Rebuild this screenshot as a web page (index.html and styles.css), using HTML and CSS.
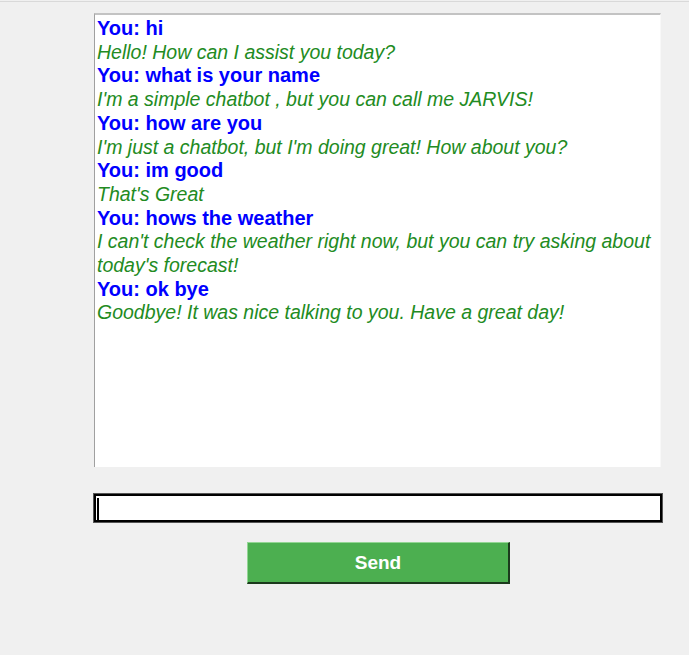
FILE: index.html
```html
<!DOCTYPE html>
<html>
<head>
<meta charset="utf-8">
<link rel="stylesheet" href="styles.css">
</head>
<body>
<div class="window">
  <div class="chat">
    <div class="you">You: hi</div>
    <div class="bot">Hello! How can I assist you today?</div>
    <div class="you">You: what is your name</div>
    <div class="bot">I'm a simple chatbot , but you can call me JARVIS!</div>
    <div class="you">You: how are you</div>
    <div class="bot">I'm just a chatbot, but I'm doing great! How about you?</div>
    <div class="you">You: im good</div>
    <div class="bot">That's Great</div>
    <div class="you">You: hows the weather</div>
    <div class="bot">I can't check the weather right now, but you can try asking about today's forecast!</div>
    <div class="you">You: ok bye</div>
    <div class="bot">Goodbye! It was nice talking to you. Have a great day!</div>
  </div>
  <div class="entry"><span class="caret"></span></div>
  <div class="btnrow"><button class="send">Send</button></div>
</div>
</body>
</html>
```
FILE: styles.css
```css
html, body {
  margin: 0;
  padding: 0;
  background: #f0f0f0;
}
body {
  width: 689px;
  height: 655px;
  overflow: hidden;
  font-family: "Liberation Sans", Arial, sans-serif;
}
.window {
  border-top: 1px solid #d9d9d9;
  margin-top: 1px;
  padding-top: 11px;
  display: flex;
  flex-direction: column;
}
.chat {
  margin-left: 94px;
  width: 567px;
  height: 454px;
  background: #fff;
  border-top: 2px solid #c3c3c3;
  border-left: 1px solid #a0a0a0;
  border-right: 1px solid #f8f8f8;
  padding: 2px 1px 0 2px;
  box-sizing: border-box;
  font-size: 20px;
  line-height: 23.7px;
}
.you {
  color: #0000ff;
  font-weight: bold;
}
.bot {
  color: #228b22;
  font-style: italic;
  font-size: 19.5px;
}
.entry {
  margin-top: 26px;
  margin-left: 93px;
  width: 570px;
  height: 30px;
  box-sizing: border-box;
  background: #fff;
  border: 1px solid #555;
  box-shadow: inset 0 0 0 2px #000;
  position: relative;
}
.caret {
  position: absolute;
  left: 3px;
  top: 4px;
  width: 2px;
  height: 22px;
  background: #000;
}
.btnrow {
  margin-top: 19px;
  margin-left: 247px;
}
.send {
  width: 263px;
  height: 42px;
  box-sizing: border-box;
  background: #4caf50;
  color: #fff;
  font-family: "Liberation Sans", Arial, sans-serif;
  font-weight: bold;
  font-size: 19px;
  border-style: solid;
  border-width: 1px 2px 2px 1px;
  border-color: #93d694 #1c3a1d #1c3a1d #93d694;
  padding: 0;
  margin: 0;
}
```
